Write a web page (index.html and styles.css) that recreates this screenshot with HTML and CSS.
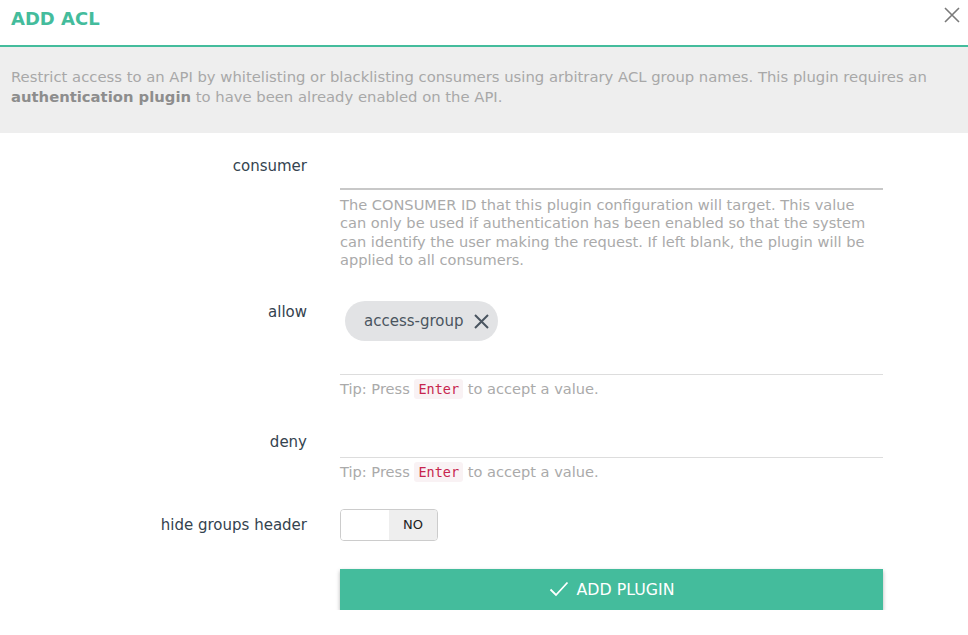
FILE: index.html
```html
<!DOCTYPE html>
<html lang="en">
<head>
    <meta charset="UTF-8">
    <meta name="viewport" content="width=device-width, initial-scale=1.0">
    <title>Add ACL</title>
    <link rel="stylesheet" href="styles.css">
</head>
<body>
    <div class="modal">
        <div class="modal-header">
            <h1>ADD ACL</h1>
            <button class="close" aria-label="close">
                <svg width="16" height="16" viewBox="0 0 16 16"><path d="M1 1L15 15M15 1L1 15" stroke="#7a7a7a" stroke-width="1.6" fill="none"/></svg>
            </button>
        </div>

        <div class="description">
            Restrict access to an API by whitelisting or blacklisting consumers using arbitrary ACL group names. This plugin requires an<br>
            <strong>authentication plugin</strong> to have been already enabled on the API.
        </div>

        <form class="form">
            <div class="row">
                <label class="row-label">consumer</label>
                <div class="field">
                    <input type="text" class="text-input consumer-input">
                    <p class="help">The CONSUMER ID that this plugin configuration will target. This value can only be used if authentication has been enabled so that the system can identify the user making the request. If left blank, the plugin will be applied to all consumers.</p>
                </div>
            </div>

            <div class="row row-allow">
                <label class="row-label">allow</label>
                <div class="field">
                    <div class="tags-box">
                        <span class="chip">access-group
                            <svg width="17" height="17" viewBox="0 0 17 17"><path d="M2 2L15 15M15 2L2 15" stroke="#4a5560" stroke-width="2" fill="none"/></svg>
                        </span>
                        <div class="tags-line"></div>
                    </div>
                    <p class="help">Tip: Press <code>Enter</code> to accept a value.</p>
                </div>
            </div>

            <div class="row row-deny">
                <label class="row-label">deny</label>
                <div class="field">
                    <div class="tags-box empty"></div>
                    <p class="help">Tip: Press <code>Enter</code> to accept a value.</p>
                </div>
            </div>

            <div class="row row-hide">
                <label class="row-label">hide groups header</label>
                <div class="field">
                    <div class="toggle">
                        <span class="toggle-off"></span>
                        <span class="toggle-on">NO</span>
                    </div>
                </div>
            </div>

            <div class="row row-submit">
                <span></span>
                <button type="button" class="submit">
                    <svg width="20" height="16" viewBox="0 0 20 16"><path d="M1.5 8.5L7 14L18.5 1.5" stroke="#fff" stroke-width="1.8" fill="none"/></svg>
                    ADD PLUGIN
                </button>
            </div>
        </form>
    </div>
</body>
</html>
```

FILE: styles.css
```css
body {
    margin: 0;
    font-family: "DejaVu Sans", Arial, sans-serif;
    background-color: #fff;
    color: #3d4c58;
}

/* header */
.modal-header {
    display: flex;
    justify-content: space-between;
    align-items: flex-start;
    height: 45px;
    border-bottom: 2px solid #44bc9c;
    box-sizing: content-box;
}

h1 {
    margin: 0;
    padding: 8px 11px 0;
    font-size: 18px;
    line-height: 22px;
    color: #44bc9c;
    font-weight: bold;
}

.close {
    background: none;
    border: none;
    padding: 0;
    margin: 7px 8px 0 0;
    cursor: pointer;
    line-height: 0;
}

.description {
    background-color: #eeeeee;
    padding: 20px 11px 26px;
    font-size: 14.8px;
    line-height: 20px;
    color: #a8a8a8;
    white-space: nowrap;
}

.description strong {
    color: #8d8d8d;
    font-weight: 600;
}

/* form */
.form {
    padding-top: 17px;
}

.row {
    display: grid;
    grid-template-columns: 307px 543px;
    column-gap: 33px;
}

.row-label {
    text-align: right;
    padding-top: 6px;
    font-size: 15px;
    line-height: 20px;
    color: #34434f;
}

.text-input {
    display: block;
    width: 100%;
    height: 40px;
    border: none;
    border-bottom: 2px solid #c8c8c8;
    box-sizing: border-box;
    outline: none;
}

.help {
    margin: 6px 0 0;
    font-size: 14.6px;
    line-height: 18.3px;
    color: #aaaaaa;
}

.row-allow {
    margin-top: 27px;
}

.tags-box {
    padding-top: 5px;
    border-bottom: 1px solid #dddddd;
}

.tags-box.empty {
    height: 31px;
    padding: 0;
}

.chip {
    display: inline-flex;
    align-items: center;
    gap: 9px;
    height: 40px;
    margin-left: 5px;
    padding: 0 8px 0 19px;
    border-radius: 20px;
    background-color: #e2e3e5;
    font-size: 15px;
    color: #4a5560;
}

.tags-line {
    height: 33px;
}

.row-allow .help,
.row-deny .help {
    margin-top: 5px;
}

code {
    font-family: "DejaVu Sans Mono", monospace;
    font-size: 13.5px;
    color: #c7254e;
    background-color: #f9f2f4;
    padding: 2px 4px;
    border-radius: 3px;
}

.row-deny {
    margin-top: 28px;
}

.row-hide {
    margin-top: 27px;
}

.toggle {
    display: flex;
    width: 98px;
    height: 32px;
    border: 1px solid #cccccc;
    border-radius: 4px;
    box-sizing: border-box;
    overflow: hidden;
}

.toggle-off {
    flex: 1;
    background-color: #fff;
}

.toggle-on {
    flex: 1;
    display: flex;
    align-items: center;
    justify-content: center;
    background-color: #eeeeee;
    font-size: 13px;
    color: #222;
}

.row-submit {
    margin-top: 28px;
}

.submit {
    display: flex;
    align-items: center;
    justify-content: center;
    gap: 8px;
    height: 41px;
    border: none;
    background-color: #44bc9c;
    color: #fff;
    font-family: inherit;
    font-size: 15.8px;
    box-shadow: 0 2px 4px rgba(0, 0, 0, 0.3);
    cursor: pointer;
}
```
